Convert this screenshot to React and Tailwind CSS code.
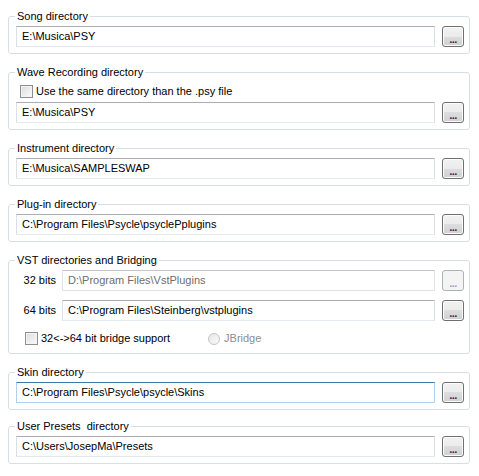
const font = { fontFamily: '"Liberation Sans", Arial, sans-serif' };

const GroupBox = ({ title, children, className = '' }) => (
  <fieldset
    className={`w-[462px] rounded-[3px] border border-[#d5dfe5] pl-[7px] pr-[5px] pb-[6px] ${className}`}
  >
    <legend className="ml-[-1px] whitespace-pre px-[2px] text-[11px] leading-[13px] text-black">{title}</legend>
    {children}
  </fieldset>
);

const PathField = ({ value, width = 'w-[419px]', disabled = false, focused = false }) => (
  <div
    className={`flex h-[21px] items-center border pl-[5px] text-[11px] ${width} ${
      disabled
        ? 'border-[#dfe2e7] border-t-[#c3c6cc] bg-white text-[#6d6d6d]'
        : focused
        ? 'border-[#b5cfe7] border-t-[#3d7bad] bg-white text-black'
        : 'border-[#dbdfe6] border-t-[#abadb3] border-b-[#e3e9ef] bg-white text-black'
    }`}
  >
    {value}
  </div>
);

const BrowseButton = ({ disabled = false }) => (
  <div
    className={`flex h-[21px] w-[22px] items-center justify-center rounded-[3px] border pb-[1px] text-[11px] leading-none ${
      disabled
        ? 'border-[#adb2b5] bg-[#f4f4f4] text-[#a0a0c0]'
        : 'border-[#707070] bg-[linear-gradient(#f2f2f2_0%,#ebebeb_50%,#dddddd_50%,#cfcfcf_100%)] text-[#2a2a70] shadow-[inset_0_0_0_1px_#fcfcfc]'
    }`}
  >
    <span className="mt-[6px] font-bold tracking-[-0.5px]">...</span>
  </div>
);

const CheckBox = () => (
  <span className="inline-block h-[13px] w-[13px] border border-[#8e8f8f] bg-[linear-gradient(135deg,#dcdcdc,#fbfbfb)] shadow-[inset_0_0_0_1px_#f4f4f4]" />
);

const PathRow = ({ value, focused, className = 'mt-[3px]' }) => (
  <div className={`flex gap-[7px] ${className}`}>
    <PathField value={value} focused={focused} />
    <BrowseButton />
  </div>
);

const App = () => {
  return (
    <div className="min-h-[476px] w-[479px] bg-white pl-[8px] pt-[10px] text-[11px] leading-[13px]" style={font}>
      <GroupBox title="Song directory">
        <PathRow value="E:\Musica\PSY" />
      </GroupBox>

      <GroupBox title="Wave Recording directory" className="mt-[12px]">
        <div className="mt-[6px] flex h-[13px] items-center gap-[3px] pl-[4px]">
          <CheckBox />
          <span className="leading-[13px]">Use the same directory than the .psy file</span>
        </div>
        <PathRow value="E:\Musica\PSY" className="mt-[4px]" />
      </GroupBox>

      <GroupBox title="Instrument directory" className="mt-[12px]">
        <PathRow value="E:\Musica\SAMPLESWAP" />
      </GroupBox>

      <GroupBox title="Plug-in directory" className="mt-[12px]">
        <PathRow value="C:\Program Files\Psycle\psyclePplugins" />
      </GroupBox>

      <GroupBox title="VST directories and Bridging" className="mt-[12px]">
        <div className="mt-[3px] flex h-[21px] items-center">
          <span className="w-[41px] pr-[1px] text-right">32 bits</span>
          <div className="ml-[5px] flex gap-[7px]">
            <PathField value="D:\Program Files\VstPlugins" width="w-[373px]" disabled />
            <BrowseButton disabled />
          </div>
        </div>
        <div className="mt-[9px] flex h-[21px] items-center">
          <span className="w-[41px] pr-[1px] text-right">64 bits</span>
          <div className="ml-[5px] flex gap-[7px]">
            <PathField value="C:\Program Files\Steinberg\vstplugins" width="w-[373px]" />
            <BrowseButton />
          </div>
        </div>
        <div className="mt-[11px] flex h-[13px] items-center pl-[9px]">
          <CheckBox />
          <span className="ml-[3px] leading-[13px]">32&lt;-&gt;64 bit bridge support</span>
          <span className="ml-[38px] inline-block h-[12px] w-[12px] rounded-full border border-[#c4c4c4] bg-[linear-gradient(135deg,#e6e6e6,#fafafa)]" />
          <span className="ml-[4px] leading-[13px] text-[#8d8d8d]">JBridge</span>
        </div>
        <div className="h-[2px]" />
      </GroupBox>

      <GroupBox title="Skin directory" className="mt-[12px]">
        <PathRow value="C:\Program Files\Psycle\psycle\Skins" focused />
      </GroupBox>

      <GroupBox title="User Presets  directory" className="mt-[10px]">
        <PathRow value="C:\Users\JosepMa\Presets" />
      </GroupBox>
    </div>
  );
};

export default App;
